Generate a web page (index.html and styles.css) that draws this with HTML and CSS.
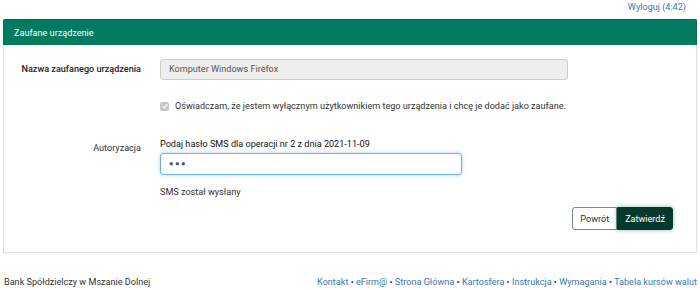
FILE: index.html
```html
<!DOCTYPE html>
<html lang="pl">
<head>
<meta charset="utf-8">
<link rel="stylesheet" href="styles.css">
</head>
<body>
<div class="topbar"><a href="#" class="logout">Wyloguj (4:42)</a></div>
<div class="panel">
  <div class="panel-head">Zaufane urządzenie</div>
  <div class="panel-body">
    <div class="row row-name">
      <div class="label">Nazwa zaufanego urządzenia</div>
      <div class="field"><div class="input disabled">Komputer Windows Firefox</div></div>
    </div>
    <div class="row row-check">
      <div class="label"></div>
      <div class="field check">
        <span class="checkbox"><svg viewBox="0 0 10 10" width="8" height="8"><path d="M2 5.2 L4.2 7.3 L8 2.8" fill="none" stroke="#fff" stroke-width="1.5"/></svg></span>
        <span>Oświadczam, że jestem wyłącznym użytkownikiem tego urządzenia i chcę je dodać jako zaufane.</span>
      </div>
    </div>
    <div class="row row-auth">
      <div class="label">Autoryzacja</div>
      <div class="field">
        <div class="hint">Podaj hasło SMS dla operacji nr 2 z dnia 2021-11-09</div>
        <div class="input focus"><span class="dots">●●●</span></div>
        <div class="sent">SMS został wysłany</div>
      </div>
    </div>
    <div class="actions">
      <button class="btn btn-back">Powrót</button><button class="btn btn-ok">Zatwierdź</button>
    </div>
  </div>
</div>
<div class="footer">
  <span class="bank">Bank Spółdzielczy w Mszanie Dolnej</span>
  <span class="links"><a href="#">Kontakt</a> • <a href="#">eFirm@</a> • <a href="#">Strona Główna</a> • <a href="#">Kartosfera</a> • <a href="#">Instrukcja</a> • <a href="#">Wymagania</a> • <a href="#">Tabela kursów walut</a></span>
</div>
</body>
</html>
```
FILE: styles.css
```css
* { box-sizing: border-box; }
html, body { margin: 0; padding: 0; background: #fff; }
body {
  font-family: Roboto, "Liberation Sans", sans-serif;
  font-size: 9.1px;
  color: #333;
  width: 700px;
}
a { color: #3a77ad; text-decoration: none; }
.topbar {
  height: 19px;
  display: flex;
  justify-content: flex-end;
  align-items: center;
  padding-right: 14px;
  padding-bottom: 5px;
}
.panel {
  margin: 0 3px 0 3px;
  border: 1px solid #e0e0e0;
  border-top: none;
  height: 234px;
}
.panel-head {
  background: #007b5f;
  color: #fff;
  height: 26px;
  line-height: 26px;
  padding-left: 10px;
  margin: 0 -1px;
  border: 1px solid #006d54;
  border-bottom: none;
  border-radius: 2px 2px 0 0;
}
.panel-body { padding-top: 14px; }
.row { display: grid; grid-template-columns: 137px 408px; column-gap: 19px; }
.label { text-align: right; font-weight: 500; color: #222; }
.row-name .label { line-height: 21px; }
.row-auth .label { font-weight: 400; color: #333; padding-top: 5px; }
.input {
  height: 21px;
  border: 1px solid #ccc;
  border-radius: 3px;
  padding: 0 8px;
  line-height: 19px;
}
.input.disabled { background: #eee; color: #555; }
.row-check { margin-top: 21px; }
.check { display: flex; align-items: center; gap: 6px; }
.checkbox {
  width: 9px; height: 9px; background: #c8c8c8; border-radius: 2px;
  display: inline-flex; align-items: center; justify-content: center;
}
.checkbox svg { display: block; }
.row-auth { margin-top: 27px; }
.hint { font-weight: 400; color: #111; line-height: 12px; margin-bottom: 3px; }
.input.focus {
  width: 302px;
  height: 22px;
  border-color: #66afe9;
  box-shadow: 0 0 4px rgba(102,175,233,.5);
  color: #555;
}
.dots { font-size: 7.5px; letter-spacing: 1.5px; vertical-align: middle; }
.sent { margin-top: 12px; }
.actions {
  display: flex;
  justify-content: flex-end;
  padding-right: 23px;
  margin-top: 10px;
}
.btn {
  font-family: inherit;
  font-size: 9.1px;
  height: 23px;
  margin: 0;
  cursor: pointer;
}
.btn-back {
  background: #fff;
  border: 1px solid #7a8a84;
  border-radius: 3px 0 0 3px;
  color: #333;
  padding: 0 7px;
}
.btn-ok {
  background: #07382c;
  border: 1px solid #07382c;
  border-radius: 0 3px 3px 0;
  color: #fff;
  padding: 0 7px;
  box-shadow: 0 0 5px rgba(0,120,90,.45);
}
.footer {
  display: flex;
  justify-content: space-between;
  padding: 0 3px 0 4px;
  margin-top: 24px;
  color: #333;
}
```
